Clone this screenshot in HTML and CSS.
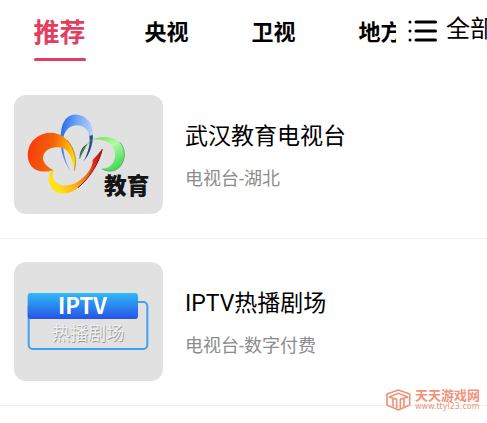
FILE: index.html
```html
<!DOCTYPE html>
<html lang="zh-CN">
<head>
    <meta charset="UTF-8">
    <meta name="viewport" content="width=device-width, initial-scale=1.0">
    <title>电视台</title>
    <link rel="stylesheet" href="styles.css">
</head>
<body>
    <header class="header">
        <nav class="tabs">
            <a href="#tuijian" class="tab active">推荐</a>
            <a href="#yangshi" class="tab">央视</a>
            <a href="#weishi" class="tab">卫视</a>
            <a href="#difang" class="tab">地方</a>
        </nav>
        <button type="button" class="all-button">
            <svg class="list-icon" viewBox="0 0 29 24" aria-hidden="true">
                <g fill="#000">
                    <circle cx="2" cy="3" r="1.500"/>
                    <circle cx="2" cy="12" r="1.500"/>
                    <circle cx="2" cy="21" r="1.500"/>
                </g>
                <path d="M8 3H27.500M8 12H27.500M8 21H27.500" stroke="#000" stroke-width="3" stroke-linecap="round"/>
            </svg>
            <span>全部</span>
        </button>
    </header>
    <main>
        <ul class="channel-list">
            <li class="channel">
                <svg class="thumb" viewBox="12 15 447 357" role="img" aria-label="教育">
                    <defs>
                        <linearGradient id="blue" x1="0" y1="0" x2="1" y2="0.3">
                            <stop offset="0" stop-color="#1d5ee8"/>
                            <stop offset="0.5" stop-color="#6fa5fb"/>
                            <stop offset="1" stop-color="#b9d4fb"/>
                        </linearGradient>
                        <linearGradient id="orange" x1="0" y1="0.4" x2="1" y2="0.6">
                            <stop offset="0" stop-color="#f8380c"/>
                            <stop offset="0.5" stop-color="#f4650a"/>
                            <stop offset="1" stop-color="#ffe000"/>
                        </linearGradient>
                        <linearGradient id="yellow" x1="0" y1="0.6" x2="1" y2="0">
                            <stop offset="0" stop-color="#ffe21a"/>
                            <stop offset="0.35" stop-color="#fb9d16"/>
                            <stop offset="0.7" stop-color="#e43213"/>
                            <stop offset="1" stop-color="#a80d22"/>
                        </linearGradient>
                        <linearGradient id="green" x1="0" y1="0" x2="0.6" y2="1">
                            <stop offset="0" stop-color="#6fd85e"/>
                            <stop offset="0.45" stop-color="#b3fba4"/>
                            <stop offset="1" stop-color="#45dc55"/>
                        </linearGradient>
                    </defs>
                    <path d="M182 243C158 212 146 166 154 119C160 88 176 72 202 74C231 77 250 101 249 136C248 168 238 195 220 215C236 186 242 158 238 137C233 116 219 107 201 106C181 106 166 119 160 141C156 174 163 211 182 243Z" fill="url(#blue)"/>
                    <path d="M249 136C248 168 238 195 220 215C236 186 242 158 238 137" fill="#284c86"/>
                    <path d="M131 240C105 249 76 246 62 226C47 202 51 166 76 145C104 121 146 123 171 150C193 174 202 208 193 242C189 211 179 181 159 175C139 168 111 173 101 194C94 211 107 230 131 240Z" fill="url(#orange)"/>
                    <path d="M171 150C193 174 202 208 193 242" fill="none" stroke="#9b6910" stroke-width="2"/>
                    <path d="M131 240C110 249 112 277 127 296C147 319 181 313 204 293C238 265 267 221 277 177C266 190 257 201 248 210C250 235 223 265 195 280C171 291 143 288 132 270C126 258 129 248 131 240Z" fill="url(#yellow)"/>
                    <path d="M204 293C238 265 267 221 277 177" fill="none" stroke="#861414" stroke-width="3"/>
                    <path d="M245 149C267 138 307 136 329 156C349 177 347 211 329 231C314 247 290 246 276 236C302 235 317 216 315 188C311 162 286 145 245 149Z" fill="url(#green)"/>
                    <path d="M329 156C349 177 347 211 329 231C314 247 290 246 276 236" fill="none" stroke="#49934c" stroke-width="2"/>
                    <path d="M209 207C207 188 216 169 232 162C224 177 216 191 209 207Z" fill="#295846"/>
                    <path d="M209 207C210 190 221 174 245 149" fill="none" stroke="#5cae62" stroke-width="2"/>
                    <text class="edu-text" x="282" y="312">教育</text>
                </svg>
                <div class="info">
                    <h2>武汉教育电视台</h2>
                    <p>电视台-湖北</p>
                </div>
            </li>
            <li class="channel">
                <svg class="thumb" viewBox="12 21 447 357" role="img" aria-label="IPTV热播剧场">
                    <defs>
                        <linearGradient id="banner" x1="0" y1="0" x2="0" y2="1">
                            <stop offset="0" stop-color="#31b9f8"/>
                            <stop offset="1" stop-color="#2653e6"/>
                        </linearGradient>
                    </defs>
                    <rect x="56" y="141" width="356" height="141" rx="12" fill="none" stroke="#42a0ef" stroke-width="6"/>
                    <rect x="53" y="114" width="331" height="78" rx="9" fill="url(#banner)"/>
                    <text class="iptv-text" x="217" y="178">IPTV</text>
                    <text class="theater-text shade" x="237" y="258">热播剧场</text>
                    <text class="theater-text" x="235" y="255">热播剧场</text>
                </svg>
                <div class="info">
                    <h2>IPTV热播剧场</h2>
                    <p>电视台-数字付费</p>
                </div>
            </li>
        </ul>
    </main>
    <div class="watermark">
        <svg class="cube" viewBox="0 0 75 66" aria-hidden="true">
            <path d="M37 3L71 15V48L37 63L3 48V15Z" fill="none" stroke="#ef9478" stroke-width="5" stroke-linejoin="round"/>
            <path d="M9 24L37 13L66 24M9 24L33 31M66 24L42 31M21 28V53M32 31V59M43 31V59M54 28V53" fill="none" stroke="#ef9478" stroke-width="5"/>
        </svg>
        <div class="site">
            <strong>天天游戏网</strong>
            <span>www.ttyl23.com</span>
        </div>
    </div>
</body>
</html>
```
FILE: styles.css
```css
body, html {
    margin: 0;
    padding: 0;
    background-color: #fff;
    font-family: Roboto, "Noto Sans CJK SC", sans-serif;
    color: #000;
}

body {
    overflow: hidden;
}

.header {
    display: flex;
    height: 72px;
}

.tabs {
    display: flex;
    flex: 1;
    min-width: 0;
    padding-left: 6px;
    overflow: hidden;
}

.tab {
    display: flex;
    flex: 0 0 107px;
    align-items: center;
    justify-content: center;
    height: 60px;
    color: #000;
    font-size: 22px;
    font-weight: bold;
    text-decoration: none;
}

.tab.active {
    position: relative;
    color: #e33e5f;
    font-size: 26px;
}

.tab.active::after {
    content: "";
    position: absolute;
    bottom: -1px;
    width: 52px;
    height: 3px;
    border-radius: 2px;
    background-color: #e33e5f;
}

.all-button {
    display: flex;
    flex: 0 0 91px;
    align-items: center;
    gap: 9px;
    height: 62px;
    padding: 0 0 0 12px;
    border: none;
    background: none;
    overflow: hidden;
    color: #000;
    font-family: inherit;
    font-size: 24px;
    line-height: 24px;
    white-space: nowrap;
    cursor: pointer;
}

.all-button span {
    padding-bottom: 4px;
}

.list-icon {
    flex: none;
    width: 29px;
    height: 24px;
}

.channel-list {
    list-style: none;
    margin: 0;
    padding: 0;
}

.channel {
    display: flex;
    align-items: center;
    gap: 22px;
    padding: 23px 14px 24px;
    border-bottom: 1px solid #eee;
}

.thumb {
    flex: none;
    width: 149px;
    height: 119px;
    border-radius: 12px;
    background-color: #e1e1e1;
}

.edu-text {
    font-family: "Noto Sans CJK SC", sans-serif;
    font-size: 68px;
    font-weight: 900;
    fill: #151515;
}

.iptv-text {
    font-family: "Noto Sans CJK SC", sans-serif;
    font-size: 66px;
    font-weight: bold;
    text-anchor: middle;
    fill: #fff;
}

.theater-text {
    font-family: "Noto Sans CJK SC", sans-serif;
    font-size: 54px;
    text-anchor: middle;
    fill: #f0f0f0;
}

.theater-text.shade {
    fill: #999;
}

.info {
    padding-top: 4px;
}

.info h2 {
    margin: 0 0 13px;
    font-size: 23px;
    font-weight: normal;
    line-height: 32px;
}

.info p {
    margin: 0;
    color: #8c8c8c;
    font-size: 18px;
    line-height: 26px;
}

.watermark {
    position: absolute;
    right: 7px;
    bottom: 12px;
    display: flex;
    align-items: center;
    gap: 4px;
    color: #ef9478;
}

.cube {
    width: 25px;
    height: 22px;
}

.site {
    display: flex;
    flex-direction: column;
}

.site strong {
    font-size: 13px;
    line-height: 13px;
}

.site span {
    font-family: "DejaVu Sans", sans-serif;
    font-size: 8px;
    line-height: 9px;
}
```
